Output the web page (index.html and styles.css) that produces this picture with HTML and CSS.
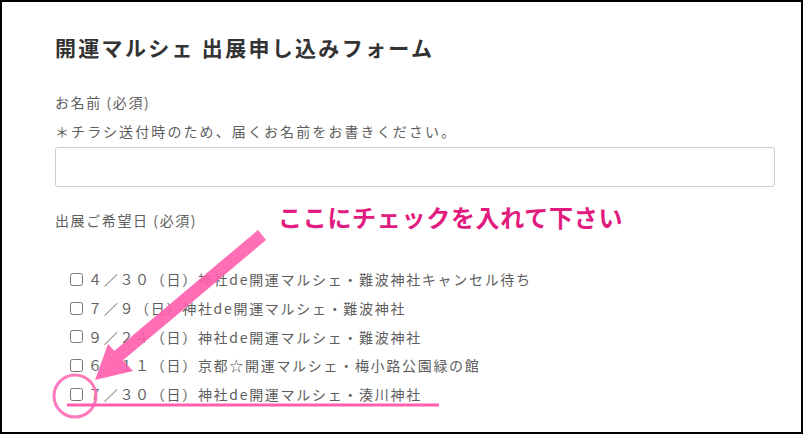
FILE: index.html
```html
<!DOCTYPE html>
<html lang="ja">
	<head>
		<meta charset="utf-8">

		<title>開運マルシェ 出展申し込みフォーム</title>

		<link rel="stylesheet" href="styles.css">
	</head>
	<body>
	<div class="frame">
		<h1>開運マルシェ 出展申し込みフォーム</h1>

		<p class="label">お名前 (必須)</p>
		<p class="note">＊チラシ送付時のため、届くお名前をお書きください。</p>
		<input class="field" type="text">

		<p class="label days">出展ご希望日 (必須)</p>
		<ul class="choices">
			<li><label><input type="checkbox">４／３０（日）神社de開運マルシェ・難波神社キャンセル待ち</label></li>
			<li><label><input type="checkbox">７／９（日）神社de開運マルシェ・難波神社</label></li>
			<li><label><input type="checkbox">９／２４（日）神社de開運マルシェ・難波神社</label></li>
			<li><label><input type="checkbox">６／１１（日）京都☆開運マルシェ・梅小路公園緑の館</label></li>
			<li><label><input type="checkbox">７／３０（日）神社de開運マルシェ・湊川神社</label></li>
		</ul>

		<!-- annotation drawn over the form -->
		<div class="callout">ここにチェックを入れて下さい</div>
		<svg class="marks" width="803" height="434" viewBox="0 0 803 434">
			<g fill="#ff5fae" opacity="0.9">
				<polygon points="258,230 266,240 121,362 113,352"/>
				<polygon points="95,380 108,344 133,371"/>
			</g>
			<circle cx="75" cy="396" r="21" fill="none" stroke="#ff6cb6" stroke-width="3" opacity="0.9"/>
			<rect x="67" y="403.5" width="372" height="3" fill="#ff5fae"/>
		</svg>
	</div>
	</body>
</html>
```

FILE: styles.css
```css
body {
	margin: 0;
	background: #fff;
	color: #5e5e5e;

	font-family: "Noto Sans CJK JP", "Noto Sans", sans-serif;
	font-size: 14px;
	line-height: 29px;
}

div.frame
{
	position: relative;
	box-sizing: border-box;
	width: 803px;
	height: 434px;
	padding: 30px 28px 0 53px;
	border: 2px solid #000;
	overflow: hidden;
}

h1 {
	margin: 0 0 26px;

	color: #333;
	font-size: 21px;
	font-weight: bold;
	line-height: 30px;
	letter-spacing: 2.3px;
}

p {
	margin: 0;
	letter-spacing: 2.1px;
}

p.label {
	letter-spacing: 1.6px;
}

p.days {
	margin-top: 19px;
}

input.field {
	display: block;
	box-sizing: border-box;
	width: 720px;
	height: 40px;
	margin-top: 1px;

	border: 1px solid #ccc;
	border-radius: 3px;
	background: #fff;
}

ul.choices {
	margin: 30px 0 0;
	padding: 0 0 0 11px;
	list-style: none;
}

ul.choices li {
	line-height: 28.75px;
	letter-spacing: 1.7px;
}

ul.choices label {
	display: flex;
	align-items: center;
}

ul.choices input {
	width: 13px;
	height: 13px;
	margin: 0 5px 0 4px;
}

div.callout {
	position: absolute;
	left: 276px;
	top: 199px;

	color: #e21b7f;
	font-size: 24px;
	font-weight: bold;
	line-height: 32px;
	letter-spacing: 0.7px;
}

svg.marks {
	position: absolute;
	left: -2px;
	top: -2px;
	pointer-events: none;
}
```
